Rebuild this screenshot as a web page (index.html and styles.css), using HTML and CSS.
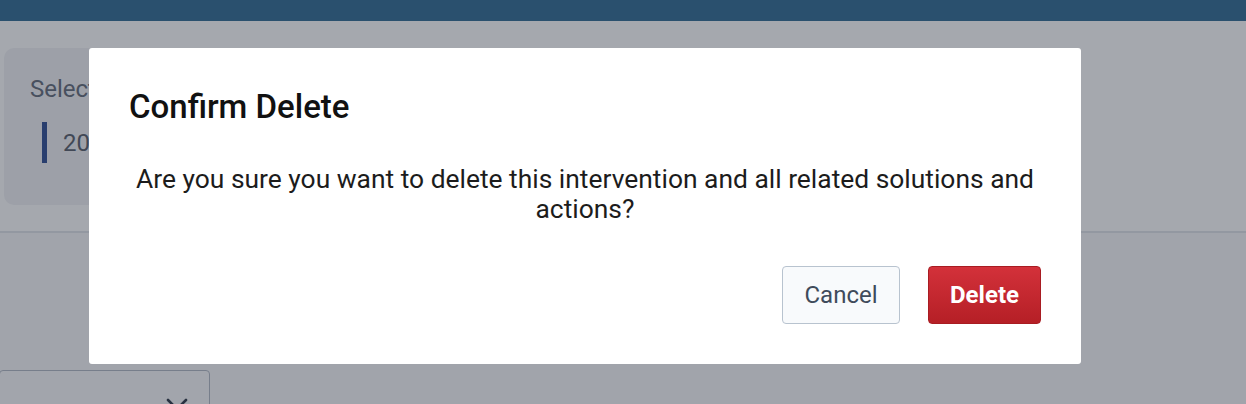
FILE: index.html
```html
<!DOCTYPE html>
<html lang="en">
<head>
<meta charset="utf-8">
<title>Confirm Delete</title>
<link rel="stylesheet" href="styles.css">
</head>
<body>
<div class="page">
  <header class="topbar"></header>
  <section class="upper">
    <div class="card">
      <div class="card-label">Select year</div>
      <div class="card-item">
        <span class="item-bar"></span>
        <span class="item-text">2024</span>
      </div>
    </div>
  </section>
  <section class="lower">
    <div class="select">
      <svg class="chev" width="22" height="14" viewBox="0 0 22 14"><path d="M2 2 L11 11 L20 2" fill="none" stroke="#374151" stroke-width="2.6" stroke-linecap="round" stroke-linejoin="round"/></svg>
    </div>
  </section>
</div>
<div class="overlay"></div>
<div class="modal" role="dialog">
  <h2 class="modal-title">Confirm Delete</h2>
  <p class="modal-body">Are you sure you want to delete this intervention and all related solutions and actions?</p>
  <div class="modal-actions">
    <button class="btn btn-cancel">Cancel</button>
    <button class="btn btn-delete">Delete</button>
  </div>
</div>
</body>
</html>
```
FILE: styles.css
```css
* { box-sizing: border-box; }
html, body { margin: 0; padding: 0; }
body {
  width: 1246px;
  height: 404px;
  overflow: hidden;
  font-family: Roboto, "Liberation Sans", Arial, sans-serif;
  background: #f8f9fb;
  position: relative;
}
.page { display: flex; flex-direction: column; }
.topbar { height: 21px; background: #3a7299; }
.upper {
  height: 212px;
  background: #ffffff;
  border-bottom: 2px solid #e3e5ea;
  padding: 27px 0 0 4px;
}
.card {
  width: 600px;
  height: 157px;
  background: #f2f3f6;
  border-radius: 10px;
  padding: 27px 0 0 26px;
}
.card-label { font-size: 24px; color: #6b7280; line-height: 28px; }
.card-item { display: flex; align-items: center; gap: 16px; margin-top: 19px; padding-left: 12px; }
.item-bar { width: 5px; height: 41px; background: #395698; }
.item-text { font-size: 24px; color: #5f6672; }
.lower { padding: 137px 0 0 0; }
.select {
  width: 211px;
  height: 50px;
  margin-left: -1px;
  border: 1px solid #b5bcc7;
  border-radius: 4px;
  background: #fbfbfc;
  position: relative;
}
.chev { position: absolute; left: 166px; top: 27px; }
.overlay {
  position: absolute;
  inset: 0;
  background: rgba(17, 24, 39, 0.375);
}
.modal {
  position: absolute;
  left: 89px;
  top: 48px;
  width: 992px;
  background: #ffffff;
  border-radius: 3px;
  padding: 40px 40px 40px 40px;
  display: flex;
  flex-direction: column;
}
.modal-title {
  margin: 0;
  font-size: 33px;
  line-height: 38px;
  font-weight: 500;
  color: #111111;
}
.modal-body {
  margin: 38px 0 0 0;
  font-size: 26.4px;
  line-height: 30px;
  text-align: center;
  color: #1c1c1c;
}
.modal-actions {
  display: flex;
  justify-content: flex-end;
  gap: 28px;
  margin-top: 42px;
}
.btn {
  height: 58px;
  font-family: Roboto, "Liberation Sans", Arial, sans-serif;
  font-size: 24px;
  border-radius: 4px;
  padding: 0;
  cursor: pointer;
}
.btn-cancel {
  width: 118px;
  background: #f8fafc;
  border: 1px solid #b8c3cf;
  color: #3f4b5b;
}
.btn-delete {
  width: 113px;
  background: linear-gradient(#d3313a, #b51f26);
  border: 1px solid #a81c22;
  color: #ffffff;
  font-weight: 700;
}
```
